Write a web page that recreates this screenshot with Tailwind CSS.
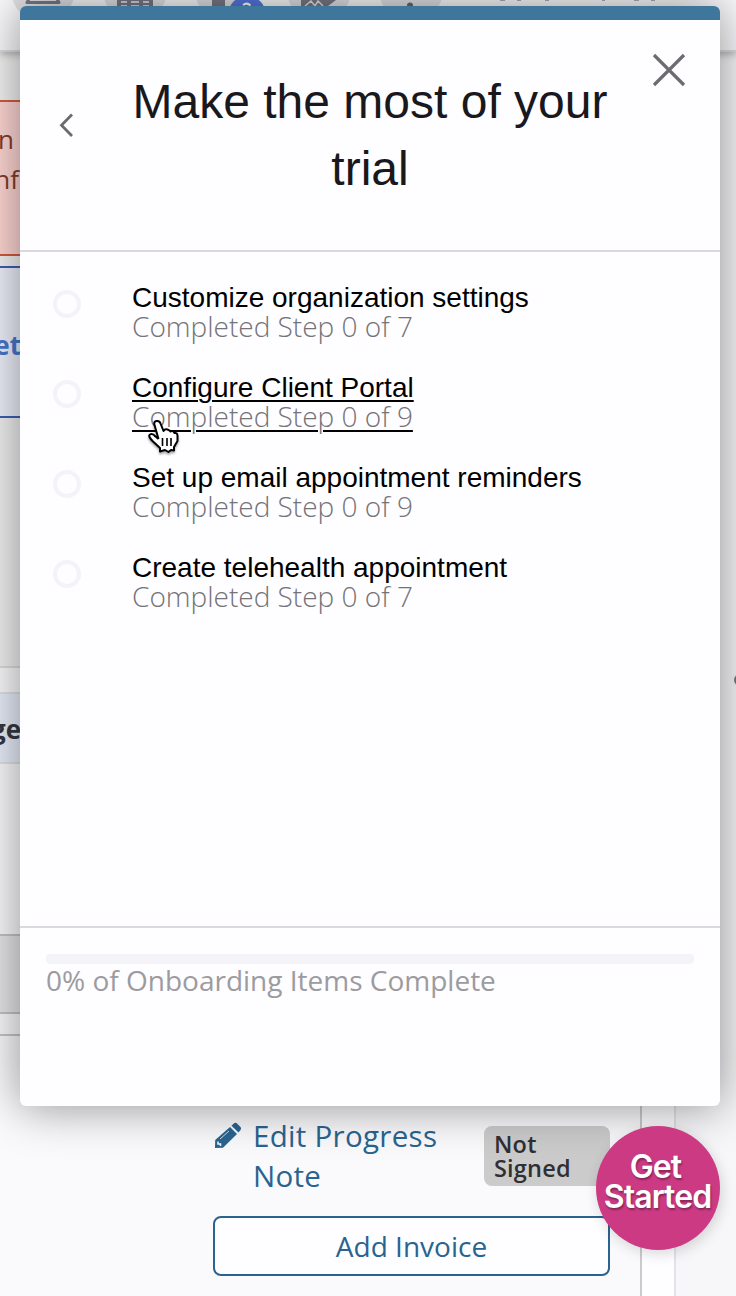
<!DOCTYPE html>
<html lang="en">
<head>
<meta charset="utf-8">
<title>Make the most of your trial</title>
<script src="https://cdn.jsdelivr.net/npm/@tailwindcss/browser@4"></script>
</head>
<body class="bg-[#fafafc] overflow-hidden">
<div class="relative w-[736px] h-[1296px] overflow-hidden font-['Open_Sans',sans-serif]">
  <!-- Page behind the dialog -->
  <div class="flex flex-col h-full">
    <header class="relative z-10 h-[52px] shrink-0 bg-[#fafafc] border-b-2 border-[#dcdce0] shadow-[0_2px_8px_rgba(0,0,0,0.3)]">
      <svg width="736" height="20" viewBox="0 0 736 20" class="block">
        <g fill="#e2e2e6"><circle cx="43" cy="-10" r="32"/><circle cx="135" cy="-10" r="32"/><circle cx="227" cy="-10" r="32"/><circle cx="319" cy="-10" r="32"/><circle cx="411" cy="-10" r="32"/></g>
        <path d="M30-3 27 2.500H59L56-3" fill="none" stroke="#777984" stroke-width="3" stroke-linejoin="round"/>
        <path d="M117 0H153V6H117Z" fill="#777984"/>
        <path d="M121 1H127V3H121ZM131 1H139V3H131ZM143 1H149V3H143ZM121 5H127V6H121ZM131 5H139V6H131ZM143 5H149V6H143Z" fill="#d3d3d8"/>
        <path d="M212 0H225V6H212ZM301 0H336L328 6H301Z" fill="#777984"/>
        <path d="M305 6 311 1 315 6 318 1 323 6" fill="none" stroke="#e2e2e6" stroke-width="1.500"/>
        <circle cx="247" cy="15" r="19" fill="#5577e0"/>
        <path d="M243 5Q247 2 250.500 5.500" fill="none" stroke="#fff" stroke-width="2"/>
        <circle cx="410" cy="5.500" r="3" fill="#666771"/>
        <g fill="#aaaab4"><rect x="500" y="0" width="5" height="1"/><rect x="517" y="0" width="4" height="1"/><rect x="545" y="0" width="4" height="1"/><rect x="602" y="0" width="3" height="1"/><rect x="634" y="0" width="5" height="1"/><rect x="651" y="0" width="4" height="1"/></g>
      </svg>
    </header>
    <div class="flex h-[982px] shrink-0">
      <div class="flex w-[360px] flex-col">
        <div class="h-[48px] bg-[#f3f3f3]"></div>
        <div class="h-[156px] border-y-2 border-[#d65a40] bg-[#ffd7d4] pt-[17px] text-[26px] leading-[40px] text-[#853c28] text-nowrap">
          <div class="flex w-[14px] justify-end">in</div>
          <div class="flex w-[19px] justify-end">inf</div>
        </div>
        <div class="h-[10px] bg-[#f3f3f3]"></div>
        <div class="h-[152px] border-y-2 border-[#3c60b4] bg-[#eef1fb] pt-[57px] text-[26px] leading-[40px] font-bold text-[#4678cf]">
          <div class="flex w-[21px] justify-end">Get</div>
        </div>
        <div class="h-[250px] border-b-2 border-[#dcdcde] bg-[#f0f0f0]"></div>
        <div class="h-[24px] bg-[#fafafc]"></div>
        <div class="h-[72px] border-y-2 border-[#dfe1e5] bg-[#e9eefa] pt-[15px] text-[26px] leading-[40px] font-bold text-[#333843]">
          <div class="flex w-[21px] justify-end">ge</div>
        </div>
        <div class="h-[170px] bg-[#fafafc]"></div>
        <div class="h-[80px] border-y-2 border-[#c3c3c5] bg-[#e6e6e8]"></div>
        <div class="h-[20px] bg-[#fafafc]"></div>
      </div>
      <div class="flex-1 bg-[#f7f7f9]"></div>
    </div>
    <div class="flex flex-1">
      <section class="w-[642px] border-t-2 border-t-[#c5c5c7] border-r-2 border-r-[#cbcacd] bg-[#fafafc] pl-[213px] pr-[30px] pt-[80px]">
        <div class="flex h-[100px] justify-between">
          <a class="flex text-[29.5px] leading-[40px] text-[#296490]">
            <svg width="28" height="28" viewBox="0 0 28 28" class="mt-[6px] mr-[12px] shrink-0" fill="#296490"><path d="M2 26 2.200 18 17 5 24 12 10 25.800Z"/><path d="M18.500 3.800 21 1.200Q22 .3 23.500 1L27.500 5Q28.500 6.500 27.500 8L25.500 10.500Z"/><path d="M5 19.500V22H7.500V24" fill="none" stroke="#fafafc" stroke-width="1.500"/><path d="M7 17 16 9" stroke="#cfdce6" stroke-width="1"/></svg>
            <span class="w-[195px] tracking-[0.3px]">Edit Progress Note</span>
          </a>
          <div class="mt-[10px] h-[60px] w-[126px] rounded-[8px] bg-[#cbcbcc] pl-[10px] pt-[6px] text-[23.5px] leading-[24px] tracking-[0.2px] font-semibold text-[#303033]">Not<br>Signed</div>
        </div>
        <button class="block h-[60px] w-[397px] rounded-[8px] border-2 border-[#296490] bg-[#fefdff] text-[28px] leading-[56px] text-[#296490]">Add Invoice</button>
      </section>
      <div class="w-[32px] bg-[#fefdff]"></div>
      <div class="flex-1 border-l-2 border-[#e4e4e8] bg-[#f7f7f9]"></div>
    </div>
  </div>
  <div class="absolute left-[731px] top-[671px] size-[18px] rounded-full border-[3px] border-[#f5f5f5] bg-[#777]"></div>

  <!-- Onboarding dialog -->
  <div class="absolute z-20 left-[20px] top-[6px] w-[700px] h-[1100px] rounded-[6px] bg-[#fefdff] shadow-[0_0_48px_rgba(0,0,0,0.44)] overflow-hidden flex flex-col">
    <div class="h-[14px] shrink-0 bg-[#3f769c]"></div>
    <div class="flex h-[232px] shrink-0 border-b-2 border-[#dadade]">
      <svg width="92" height="230" viewBox="0 0 92 230" class="shrink-0" fill="none" stroke="#6b6b6e" stroke-width="2.800"><path d="M52 94.500 41.500 105.200 52 116"/></svg>
      <h1 class="mt-[48px] w-[516px] text-center font-['Liberation_Sans',sans-serif] text-[48px] leading-[67px] text-[#19181c]">Make the most of your trial</h1>
      <svg width="92" height="100" viewBox="0 0 92 100" class="shrink-0" fill="none" stroke="#6c6b70" stroke-width="3.200"><path d="M26 35 56 65M56 35 26 65"/></svg>
    </div>
    <ul class="h-[674px] shrink-0 pl-[33px] pt-[30px] text-[28px] leading-[30px]">
      <li class="flex h-[90px]"><span class="mt-[8px] mr-[51px] size-[28px] rounded-full border-4 border-[#f4f3f7]"></span><div class="pt-px"><div class="font-['Liberation_Sans',sans-serif] text-black">Customize organization settings</div><div class="-mt-[2px] font-light text-[#747377]">Completed Step 0 of 7</div></div></li>
      <li class="flex h-[90px]"><span class="mt-[8px] mr-[51px] size-[28px] rounded-full border-4 border-[#f4f3f7]"></span><div class="pt-px underline decoration-black decoration-2 underline-offset-[3px]"><div class="font-['Liberation_Sans',sans-serif] text-black">Configure Client Portal</div><div class="-mt-[2px] font-light text-[#747377]">Completed Step 0 of 9</div></div></li>
      <li class="flex h-[90px]"><span class="mt-[8px] mr-[51px] size-[28px] rounded-full border-4 border-[#f4f3f7]"></span><div class="pt-px"><div class="font-['Liberation_Sans',sans-serif] text-black">Set up email appointment reminders</div><div class="-mt-[2px] font-light text-[#747377]">Completed Step 0 of 9</div></div></li>
      <li class="flex h-[90px]"><span class="mt-[8px] mr-[51px] size-[28px] rounded-full border-4 border-[#f4f3f7]"></span><div class="pt-px"><div class="font-['Liberation_Sans',sans-serif] text-black">Create telehealth appointment</div><div class="-mt-[2px] font-light text-[#747377]">Completed Step 0 of 7</div></div></li>
    </ul>
    <div class="flex-1 border-t-2 border-[#dadade] px-[26px] pt-[26px]">
      <div class="h-[10px] rounded-[4px] bg-[#f4f3f7]"></div>
      <div class="-mt-px text-[28px] leading-[34px] text-[#9c9ba0]">0% of Onboarding Items Complete</div>
    </div>
  </div>

  <!-- Launcher -->
  <div class="absolute z-30 left-[596px] top-[1126px] size-[124px] rounded-full bg-[#cc3a84] shadow-[2px_4px_14px_rgba(0,0,0,0.15)] flex justify-center pt-[26px] text-center font-['Inter',sans-serif] text-[32px] leading-[30px] font-semibold tracking-[-0.9px] text-white [text-shadow:1px_2px_2px_rgba(0,0,0,0.35)]"><div class="-ml-[1px]"><span class="mr-[4px]">Get</span><br>Started</div></div>

  <!-- Hand pointer -->
  <svg class="absolute z-40 left-[146px] top-[418px]" width="36" height="38" viewBox="0 0 36 38" fill="white" stroke="black" stroke-width="2" stroke-linejoin="round"><path d="M12.500 21 8.500 7Q7.500 3.500 10.500 3T14.500 5.500L17.500 13Q19 10.500 21.500 11.500T24.500 13.500Q27 12 28.500 15Q31.500 14.500 31.500 18V23L28 29V32.500L25 32 22.500 34 19 32 14 33.500V30L7 23.500Q1.500 18 4 16.500T9.500 18.500L12.500 21" style="filter:drop-shadow(0 2px 1px #0005)"/><path d="M16.500 20V28M21 20V28M25 20V28" stroke-width="1.600"/></svg>
</div>
</body>
</html>
